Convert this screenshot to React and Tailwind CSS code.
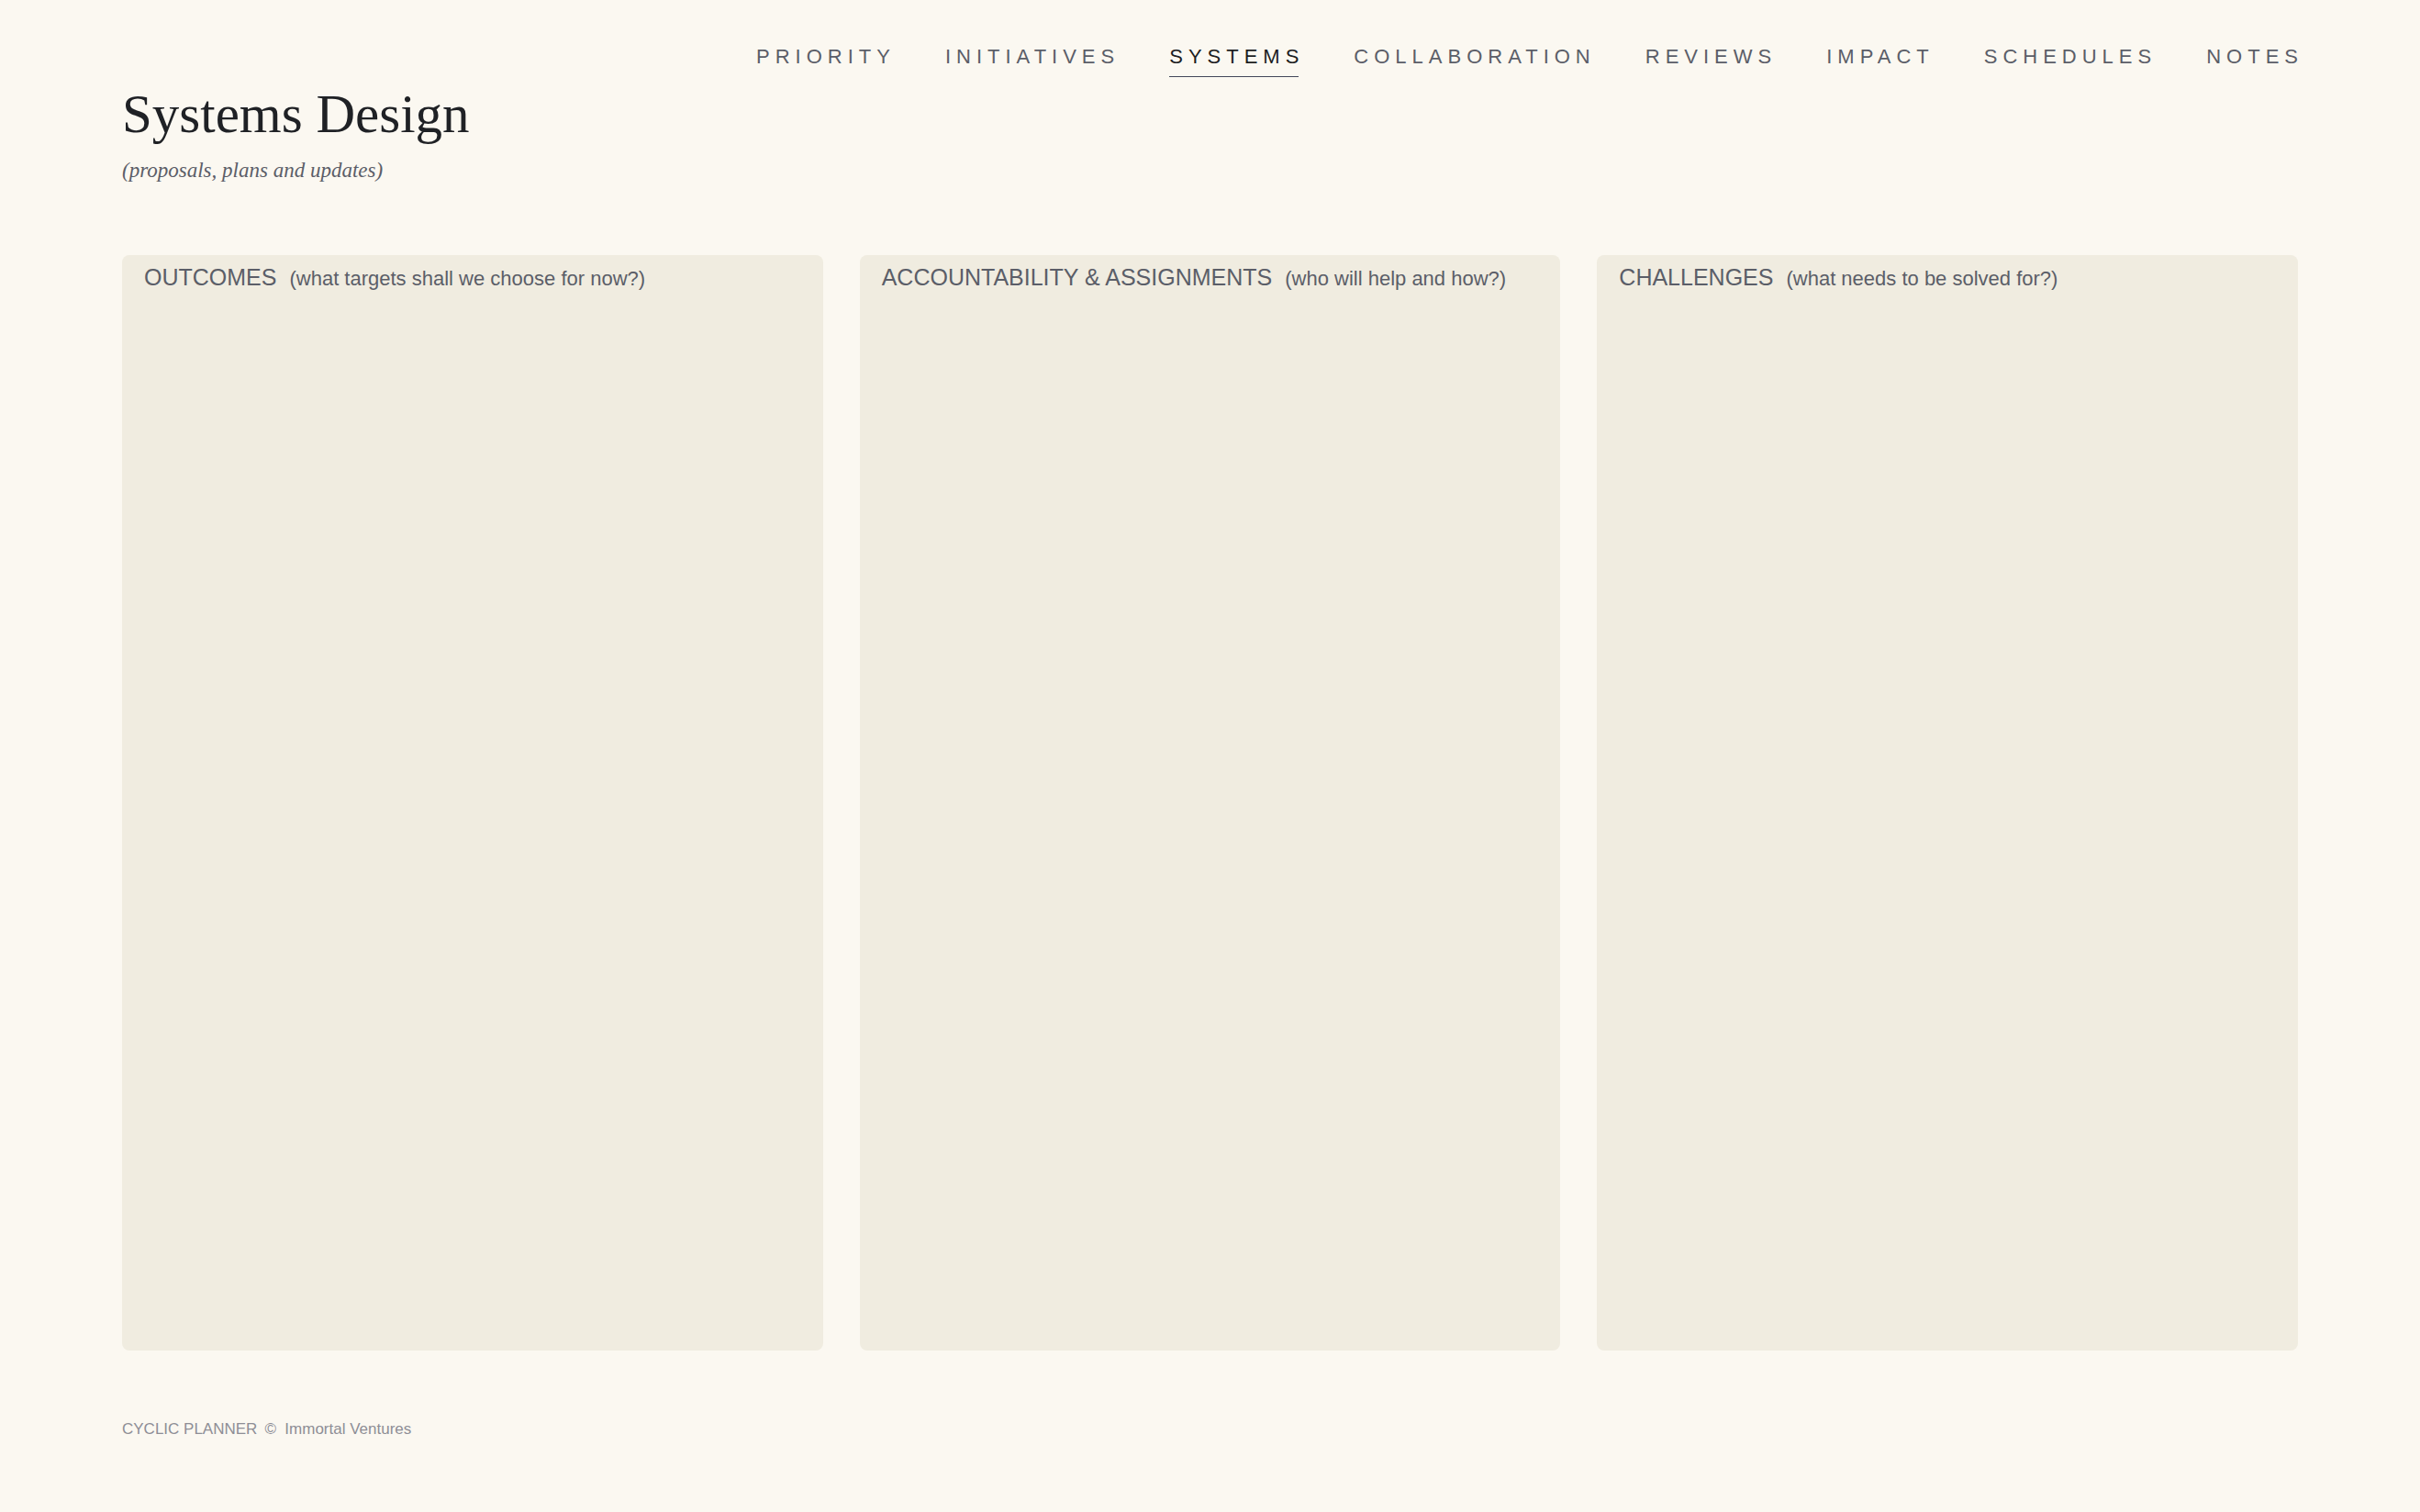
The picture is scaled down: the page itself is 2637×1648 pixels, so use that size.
import React from "react";

const navItems = [
  "PRIORITY",
  "INITIATIVES",
  "SYSTEMS",
  "COLLABORATION",
  "REVIEWS",
  "IMPACT",
  "SCHEDULES",
  "NOTES",
];

const panels = [
  { id: "outcomes", title: "OUTCOMES", hint: "(what targets shall we choose for now?)" },
  { id: "accountability", title: "ACCOUNTABILITY & ASSIGNMENTS", hint: "(who will help and how?)" },
  { id: "challenges", title: "CHALLENGES", hint: "(what needs to be solved for?)" },
];

const Panel = ({ id, title, hint }) => (
  <section className="flex flex-col rounded-lg bg-[#f0ece0]">
    <label htmlFor={id} className="flex items-baseline gap-3.5 px-6 pt-2 text-[#5b5e68]">
      <span className="text-[25px] leading-8">{title}</span>
      <span className="text-[22px] leading-8">{hint}</span>
    </label>
    <textarea id={id} className="w-full flex-1 resize-none bg-transparent px-6 py-4 text-xl outline-none" />
  </section>
);

export default function App() {
  const active = "SYSTEMS";

  return (
    <div className="flex min-h-screen flex-col bg-[#fbf8f1] px-[133px] font-['Liberation_Sans',Arial,sans-serif]">
      <nav className="flex justify-end gap-[60px] pt-[46px]">
        {navItems.map((item) => (
          <a
            key={item}
            href={`#${item.toLowerCase()}`}
            className={`border-b pb-[5px] text-[22px] leading-8 tracking-[6px] ${
              item === active ? "border-[#43475a] text-[#1d1e22]" : "border-transparent text-[#5b5e68]"
            }`}
          >
            {/* negative margin drops the trailing letter gap from the underline */}
            <span className="-mr-1.5 block">{item}</span>
          </a>
        ))}
      </nav>

      <header>
        <h1 className="font-['Liberation_Serif',serif] text-[59px] leading-20 text-[#1f2125]">Systems Design</h1>
        <p className="mt-1.5 font-['Liberation_Serif',serif] text-[23px] italic leading-8 text-[#5b5e68]">
          (proposals, plans and updates)
        </p>
      </header>

      <main className="mt-[76px] grid flex-1 grid-cols-3 gap-10">
        {panels.map((panel) => (
          <Panel key={panel.id} {...panel} />
        ))}
      </main>

      <footer className="flex gap-2 pt-[74px] pb-[78px] text-[17px] leading-6 text-[#8e8e96]">
        <span>CYCLIC PLANNER</span>
        <span>©&nbsp; Immortal Ventures</span>
      </footer>
    </div>
  );
}
